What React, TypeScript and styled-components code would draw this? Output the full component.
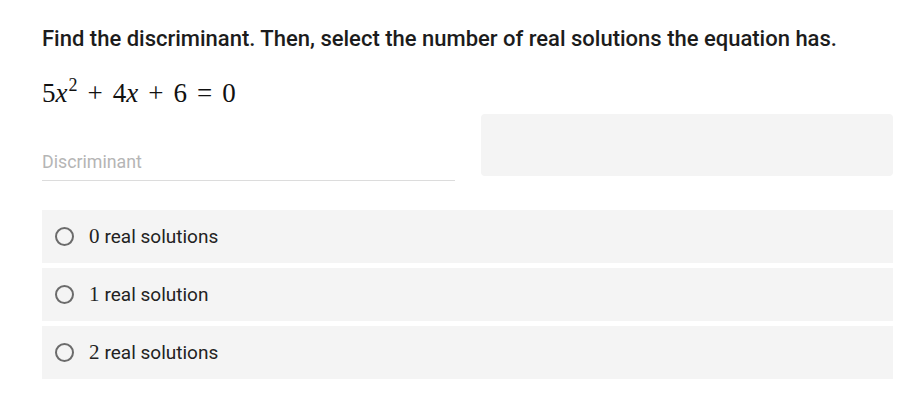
import styled, { createGlobalStyle } from 'styled-components';

const GlobalStyle = createGlobalStyle`
  body {
    margin: 0;
    background: #fff;
    font-family: Roboto, "Liberation Sans", sans-serif;
  }
`;

const Page = styled.main`
  width: 851px;
  padding: 24px 0 0 42px;
`;

const Prompt = styled.h1`
  margin: 0;
  font-size: 22px;
  line-height: 30px;
  font-weight: 500;
  color: #1c1c1c;
`;

const Equation = styled.div`
  margin-top: 24px;
  font-family: "Liberation Serif", "DejaVu Serif", serif;
  font-size: 27px;
  line-height: 30px;
  color: #111;

  i {
    font-style: italic;
  }
  sup {
    font-size: 18px;
    line-height: 0;
    vertical-align: 11px;
    margin-left: 1px;
  }
`;

const Op = styled.span`
  margin: 0 10px;
`;

const AnswerRow = styled.div`
  margin-top: 6px;
  display: grid;
  grid-template-columns: 1fr 1fr;
  gap: 26px;
  align-items: start;
`;

const Field = styled.label`
  display: flex;
  align-items: flex-end;
  height: 67px;
  border-bottom: 1px solid #dcdcdc;
  padding-bottom: 8px;
  box-sizing: border-box;
  font-size: 17.8px;
  color: #b5b5b5;
`;

const WorkBox = styled.div`
  height: 62px;
  background: #f4f4f4;
  border-radius: 4px;
`;

const Options = styled.div`
  margin-top: 29px;
  display: flex;
  flex-direction: column;
  gap: 5px;
`;

const Option = styled.div`
  height: 53px;
  background: #f4f4f4;
  display: flex;
  align-items: center;
  padding-left: 13px;
  font-size: 19px;
  color: #222;
`;

const Radio = styled.span`
  width: 15px;
  height: 15px;
  border: 2px solid #6b6b6b;
  border-radius: 50%;
  margin-right: 15px;
`;

const Num = styled.span`
  font-family: "Liberation Serif", "DejaVu Serif", serif;
  font-size: 21px;
  margin-right: 5px;
`;

const choices = [
  { n: '0', label: 'real solutions' },
  { n: '1', label: 'real solution' },
  { n: '2', label: 'real solutions' },
];

export default function App() {
  return (
    <>
      <GlobalStyle />
      <Page>
        <Prompt>
          Find the discriminant. Then, select the number of real solutions the equation has.
        </Prompt>
        <Equation>
          5<i>x</i>
          <sup>2</sup>
          <Op>+</Op>4<i>x</i>
          <Op>+</Op>6<Op>=</Op>0
        </Equation>
        <AnswerRow>
          <Field>Discriminant</Field>
          <WorkBox />
        </AnswerRow>
        <Options>
          {choices.map((c) => (
            <Option key={c.n}>
              <Radio />
              <Num>{c.n}</Num>
              {c.label}
            </Option>
          ))}
        </Options>
      </Page>
    </>
  );
}
